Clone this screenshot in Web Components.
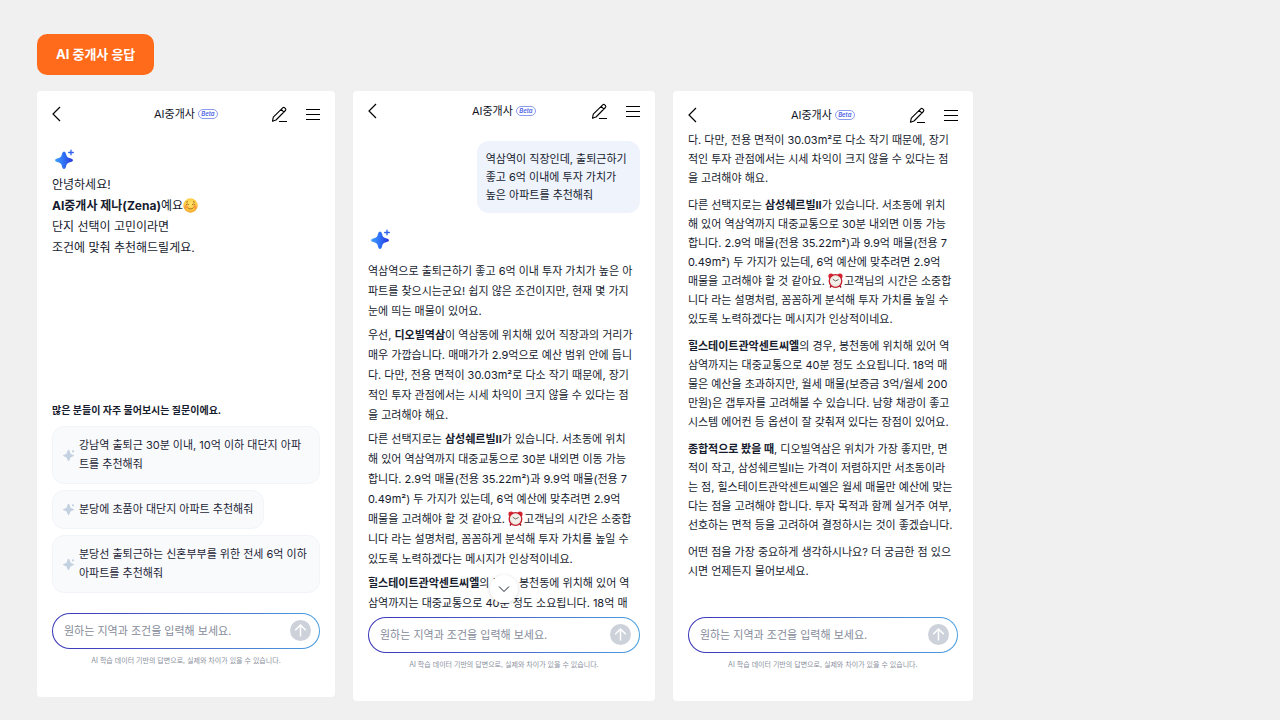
<!DOCTYPE html>
<html lang="ko">
<head>
<meta charset="utf-8">
<title>AI 중개사 응답</title>
<style>
  body { margin: 0; background: #f0f0f0; color: #161b2e; font-family: Inter, "Noto Sans CJK KR", sans-serif; font-size: 11px; }
</style>
</head>
<body>
<response-board></response-board>

<template id="board-tpl">
  <style>
    :host { display: block; padding: 34px 24% 19px 37px; }
    .tag { border: 0; border-radius: 10px; background: #ff6b1a; color: #fff; font: 700 13px/41px Inter, "Noto Sans CJK KR", sans-serif; height: 41px; padding: 0 19px; display: block; margin-bottom: 16px; }
    main { display: grid; grid-template-columns: 298fr 302fr 300fr; gap: 18px; align-items: start; }
    phone-screen:nth-child(1) { aspect-ratio: 298 / 606; }
    phone-screen:nth-child(2) { aspect-ratio: 302 / 610; --head: 40px; }
    phone-screen:nth-child(3) { aspect-ratio: 300 / 610; --line: 19px; --gap: 8px; --head: 40px; --head-top: 8px; }
    .hello { font-size: 12px; line-height: 21px; margin: 0; }
    spark-mark { margin: 11px 0 4px; }
    .answer { margin: 15px 0 11px; }
    h2 { font-size: 10px; line-height: 14px; margin: auto 0 9px; }
    .list { display: grid; gap: 6px; justify-items: start; margin-bottom: 20px; }
    b { font-weight: 700; }
  </style>
  <button class="tag" type="button">AI 중개사 응답</button>
  <main>
    <phone-screen>
      <spark-mark></spark-mark>
      <p class="hello">안녕하세요!<br><b>AI중개사 제나(Zena)</b>예요<emoji-mark kind="smile"></emoji-mark><br>단지 선택이 고민이라면<br>조건에 맞춰 추천해드릴게요.</p>
      <h2>많은 분들이 자주 물어보시는 질문이에요.</h2>
      <div class="list">
        <prompt-chip>강남역 출퇴근 30분 이내, 10억 이하 대단지 아파<br>트를 추천해줘</prompt-chip>
        <prompt-chip>분당에 초품아 대단지 아파트 추천해줘</prompt-chip>
        <prompt-chip>분당선 출퇴근하는 신혼부부를 위한 전세 6억 이하<br>아파트를 추천해줘</prompt-chip>
      </div>
    </phone-screen>
    <phone-screen jump>
      <user-bubble>역삼역이 직장인데, 출퇴근하기<br>좋고 6억 이내에 투자 가치가<br>높은 아파트를 추천해줘</user-bubble>
      <spark-mark class="answer"></spark-mark>
      <chat-text>역삼역으로 출퇴근하기 좋고 6억 이내 투자 가치가 높은 아<br>파트를 찾으시는군요! 쉽지 않은 조건이지만, 현재 몇 가지<br>눈에 띄는 매물이 있어요.</chat-text>
      <chat-text>우선, <b>디오빌역삼</b>이 역삼동에 위치해 있어 직장과의 거리가<br>매우 가깝습니다. 매매가가 2.9억으로 예산 범위 안에 듭니<br>다. 다만, 전용 면적이 30.03m²로 다소 작기 때문에, 장기<br>적인 투자 관점에서는 시세 차익이 크지 않을 수 있다는 점<br>을 고려해야 해요.</chat-text>
      <chat-text>다른 선택지로는 <b>삼성쉐르빌II</b>가 있습니다. 서초동에 위치<br>해 있어 역삼역까지 대중교통으로 30분 내외면 이동 가능<br>합니다. 2.9억 매물(전용 35.22m²)과 9.9억 매물(전용 7<br>0.49m²) 두 가지가 있는데, 6억 예산에 맞추려면 2.9억<br>매물을 고려해야 할 것 같아요. <emoji-mark kind="clock"></emoji-mark>고객님의 시간은 소중합<br>니다 라는 설명처럼, 꼼꼼하게 분석해 투자 가치를 높일 수<br>있도록 노력하겠다는 메시지가 인상적이네요.</chat-text>
      <chat-text><b>힐스테이트관악센트씨엘</b>의 경우, 봉천동에 위치해 있어 역<br>삼역까지는 대중교통으로 40분 정도 소요됩니다. 18억 매</chat-text>
    </phone-screen>
    <phone-screen>
      <chat-text>다. 다만, 전용 면적이 30.03m²로 다소 작기 때문에, 장기<br>적인 투자 관점에서는 시세 차익이 크지 않을 수 있다는 점<br>을 고려해야 해요.</chat-text>
      <chat-text>다른 선택지로는 <b>삼성쉐르빌II</b>가 있습니다. 서초동에 위치<br>해 있어 역삼역까지 대중교통으로 30분 내외면 이동 가능<br>합니다. 2.9억 매물(전용 35.22m²)과 9.9억 매물(전용 7<br>0.49m²) 두 가지가 있는데, 6억 예산에 맞추려면 2.9억<br>매물을 고려해야 할 것 같아요. <emoji-mark kind="clock"></emoji-mark>고객님의 시간은 소중합<br>니다 라는 설명처럼, 꼼꼼하게 분석해 투자 가치를 높일 수<br>있도록 노력하겠다는 메시지가 인상적이네요.</chat-text>
      <chat-text><b>힐스테이트관악센트씨엘</b>의 경우, 봉천동에 위치해 있어 역<br>삼역까지는 대중교통으로 40분 정도 소요됩니다. 18억 매<br>물은 예산을 초과하지만, 월세 매물(보증금 3억/월세 200<br>만원)은 갭투자를 고려해볼 수 있습니다. 남향 채광이 좋고<br>시스템 에어컨 등 옵션이 잘 갖춰져 있다는 장점이 있어요.</chat-text>
      <chat-text><b>종합적으로 봤을 때</b>, 디오빌역삼은 위치가 가장 좋지만, 면<br>적이 작고, 삼성쉐르빌II는 가격이 저렴하지만 서초동이라<br>는 점, 힐스테이트관악센트씨엘은 월세 매물만 예산에 맞는<br>다는 점을 고려해야 합니다. 투자 목적과 함께 실거주 여부,<br>선호하는 면적 등을 고려하여 결정하시는 것이 좋겠습니다.</chat-text>
      <chat-text>어떤 점을 가장 중요하게 생각하시나요? 더 궁금한 점 있으<br>시면 언제든지 물어보세요.</chat-text>
    </phone-screen>
  </main>
</template>

<template id="phone-tpl">
  <style>
    :host { display: flex; flex-direction: column; box-sizing: border-box; min-width: 0; background: #fff; border-radius: 4px; padding: 0 15px; }
    .body { flex: 1; min-height: 0; overflow: hidden; display: flex; flex-direction: column; white-space: nowrap; }
    .foot { position: relative; }
    .jump { position: absolute; left: 50%; top: -42px; margin-left: -14px; width: 28px; height: 28px; border: 0; padding: 0; border-radius: 50%; background: #fff; box-shadow: 0 1px 4px #00000026; display: none; place-items: center; }
    :host([jump]) .jump { display: grid; }
  </style>
  <phone-header></phone-header>
  <div class="body"><slot></slot></div>
  <div class="foot">
    <button class="jump" type="button" aria-label="아래로"><svg width="12" height="8" viewBox="0 0 12 8" fill="none" stroke="#161b2e"><path d="M1 1.5 6 6.5 11 1.5"/></svg></button>
    <message-form></message-form>
  </div>
</template>

<template id="header-tpl">
  <style>
    :host { display: grid; grid-template-columns: 1fr auto 1fr; align-items: center; box-sizing: border-box; height: var(--head, 46px); padding-top: var(--head-top, 0); flex: none; color: #10131f; }
    button { border: 0; background: none; padding: 0; display: block; }
    svg { display: block; }
    .title { display: flex; align-items: center; gap: 3px; font-size: 11px; line-height: 16px; }
    h1 { font: inherit; margin: 0; }
    .beta { border: 1px solid #8d9bec; border-radius: 6px; height: 8px; width: 18px; font: italic 600 6px/8px Inter, sans-serif; text-align: center; color: #4c63e6; }
    .tools { display: flex; gap: 18px; justify-content: flex-end; align-items: center; }
  </style>
  <button type="button" aria-label="뒤로"><svg width="10" height="16" viewBox="0 0 10 16" fill="none" stroke="currentColor" stroke-width="1.2"><path d="M8 1 1 8l7 7"/></svg></button>
  <div class="title"><h1>AI중개사</h1><span class="beta">Beta</span></div>
  <div class="tools">
    <button type="button" aria-label="새 대화"><svg width="17" height="17" viewBox="0 0 17 17" fill="none" stroke="currentColor" stroke-width="1.1" stroke-linejoin="round"><path d="M1.500 15.200 2.300 11.200 11.700 1.800Q12.700 .9 13.700 1.800L14.500 2.600Q15.300 3.600 14.400 4.500L5 14ZM10.200 3.400 12.900 6.100M8 15.500H16"/></svg></button>
    <button type="button" aria-label="메뉴"><svg width="14" height="13" viewBox="0 0 14 13" stroke="currentColor"><path d="M0 1.500H14M0 6.500H14M0 11.500H14"/></svg></button>
  </div>
</template>

<template id="form-tpl">
  <style>
    :host { display: block; height: 84px; }
    form { display: flex; align-items: center; box-sizing: border-box; height: 36px; border: 1px solid transparent; border-radius: 18px; padding: 0 8px 0 11px; background: linear-gradient(#fff, #fff) padding-box, linear-gradient(90deg, #3a36b8, #4a5ac8 40%, #4a9fe0) border-box; }
    input { flex: 1; min-width: 0; border: 0; outline: 0; background: none; padding: 0; font: inherit; font-size: 11px; height: 20px; }
    input::placeholder { color: #868b9a; opacity: 1; }
    button { border: 0; padding: 0; width: 21px; height: 21px; border-radius: 50%; background: #cdd2da; display: grid; place-items: center; }
    p { margin: 7px 0 0; font-size: 7px; line-height: 10px; text-align: center; color: #8b909d; white-space: nowrap; }
  </style>
  <form>
    <input type="text" aria-label="질문 입력" placeholder="원하는 지역과 조건을 입력해 보세요.">
    <button type="button" aria-label="보내기"><svg width="13" height="13" viewBox="0 0 13 13" fill="none" stroke="#fff" stroke-width="1.500"><path d="M6.500 12.500V1M1.200 6.300 6.500 1 11.800 6.300"/></svg></button>
  </form>
  <p>AI 학습 데이터 기반의 답변으로, 실제와 차이가 있을 수 있습니다.</p>
</template>

<template id="chip-tpl">
  <style>
    :host { display: block; max-width: 100%; }
    :host(:nth-child(odd)) { width: 100%; }
    button { display: flex; width: 100%; box-sizing: border-box; align-items: center; gap: 4px; text-align: left; border: 1px solid #f1f4f9; border-radius: 12px; background: #f8fafc; color: #1d2436; font: inherit; font-size: 11px; line-height: 19px; padding: 9px 10px; white-space: nowrap; }
    svg { flex: none; }
  </style>
  <button type="button"><svg width="12" height="12" viewBox="0 0 12 12" fill="#c3d1e0"><path d="M5.500 .8Q6.600 .8 6.900 2.900 7.200 5.200 9 5.500 11 5.800 11 6.600 11 7.400 9 7.700 7.100 8 6.900 10 6.500 12 5.500 12 4.500 12 4.200 10 3.900 8 2 7.700 0 7.400 0 6.600 0 5.800 2 5.500 3.900 5.200 4.200 2.900 4.500 .8 5.500 .8Z"/><circle cx="10" cy="2.300" r="1.100"/></svg><span><slot></slot></span></button>
</template>

<template id="bubble-tpl">
  <style>
    :host { display: block; align-self: flex-end; box-sizing: border-box; width: 60%; flex: none; margin-top: 10px; padding: 9px; border-radius: 12px; background: #eef3fc; line-height: 18px; }
  </style>
  <slot></slot>
</template>

<template id="text-tpl">
  <style>:host { display: block; flex: none; line-height: var(--line, 20px); margin-bottom: var(--gap, 4px); }</style>
  <slot></slot>
</template>

<template id="spark-tpl">
  <style>:host { display: block; flex: none; height: 22px; padding-left: 2px; } svg { display: block; }</style>
  <svg width="22" height="22" viewBox="0 0 22 22"><defs><linearGradient id="g" x1="0" x2="1"><stop stop-color="#3fa0ff"/><stop offset=".5" stop-color="#2f6ff5"/><stop offset="1" stop-color="#2a35dc"/></linearGradient></defs><path fill="url(#g)" d="M10 3.500Q11.600 3.500 12.200 6.500 12.700 9.600 16 10.200 19 10.800 19 12.200 19 13.600 16 14.200 12.700 14.800 12.200 17.700 11.600 21 10 21 8.400 21 7.800 17.700 7.300 14.800 4 14.200 1 13.600 1 12.200 1 10.800 4 10.200 7.300 9.600 7.800 6.500 8.400 3.500 10 3.500Z"/><path d="M17 2.200V6.800M14.700 4.500H19.300" stroke="#2f62ee" stroke-width="1.300" stroke-linecap="round"/></svg>
</template>

<template id="smile-tpl">
  <style>:host { display: inline-block; width: 15px; height: 15px; vertical-align: -3px; } svg { display: block; }</style>
  <svg role="img" aria-label="미소" width="15" height="15" viewBox="0 0 15 15" fill="none"><defs><radialGradient id="f" cy=".4" r=".6"><stop stop-color="#ffe56a"/><stop offset=".7" stop-color="#fdcb40"/><stop offset="1" stop-color="#f09a2c"/></radialGradient></defs><circle cx="7.500" cy="7.500" r="7.200" fill="url(#f)"/><circle cx="3.200" cy="9" r="1.800" fill="#f4703a" opacity=".55"/><circle cx="11.800" cy="9" r="1.800" fill="#f4703a" opacity=".55"/><path d="M3 6.800Q4.500 5.200 6 6.800M9 6.800Q10.500 5.200 12 6.800M5 10Q7.500 12.200 10 10M3.200 4.300 5 3.500M10 3.500 11.800 4.300" stroke="#95561c" stroke-width=".8"/></svg>
</template>

<template id="clock-tpl">
  <style>:host { display: inline-block; width: 16px; height: 15px; vertical-align: -3px; } svg { display: block; }</style>
  <svg role="img" aria-label="알람 시계" width="15" height="15" viewBox="0 0 15 15" fill="none"><path d="M3.500 12.500 2 14.500M11.500 12.500 13 14.500" stroke="#8f1420" stroke-width="1.400"/><circle cx="3" cy="3" r="2.600" fill="#d8202f"/><circle cx="12" cy="3" r="2.600" fill="#d8202f"/><circle cx="7.500" cy="8" r="6.300" fill="#f3efe9" stroke="#c41f2d" stroke-width="1.300"/><circle cx="7.500" cy="8" r="4.600" stroke="#c9c2b8" stroke-width=".6" stroke-dasharray=".6 1.800"/><path d="M4.800 6.200 7.500 8 10.500 6.500" stroke="#444" stroke-width=".8"/></svg>
</template>

<script>
  const define = (name, pick) => customElements.define(name, class extends HTMLElement {
    connectedCallback() {
      if (this.shadowRoot) return;
      const id = typeof pick === 'function' ? pick(this) : pick;
      this.attachShadow({ mode: 'open' }).append(document.getElementById(id).content.cloneNode(true));
    }
  });
  define('spark-mark', 'spark-tpl');
  define('emoji-mark', el => el.getAttribute('kind') + '-tpl');
  define('chat-text', 'text-tpl');
  define('user-bubble', 'bubble-tpl');
  define('prompt-chip', 'chip-tpl');
  define('message-form', 'form-tpl');
  define('phone-header', 'header-tpl');
  define('phone-screen', 'phone-tpl');
  define('response-board', 'board-tpl');
</script>
</body>
</html>
